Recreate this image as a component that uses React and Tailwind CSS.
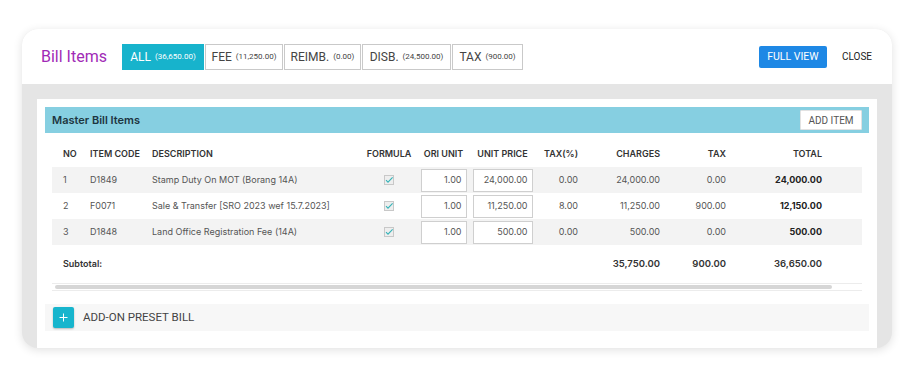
import React from "react";

const tabs = [
  { label: "ALL", amount: "36,650.00", active: true, w: "w-[82px]" },
  { label: "FEE", amount: "11,250.00", w: "w-[78px]" },
  { label: "REIMB.", amount: "0.00", w: "w-[77px]" },
  { label: "DISB.", amount: "24,500.00", w: "w-[89px]" },
  { label: "TAX", amount: "900.00", w: "w-[71px]" },
];

const items = [
  { no: 1, code: "D1849", desc: "Stamp Duty On MOT (Borang 14A)", unit: "1.00", price: "24,000.00", taxPct: "0.00", charges: "24,000.00", tax: "0.00", total: "24,000.00" },
  { no: 2, code: "F0071", desc: "Sale & Transfer [SRO 2023 wef 15.7.2023]", unit: "1.00", price: "11,250.00", taxPct: "8.00", charges: "11,250.00", tax: "900.00", total: "12,150.00" },
  { no: 3, code: "D1848", desc: "Land Office Registration Fee (14A)", unit: "1.00", price: "500.00", taxPct: "0.00", charges: "500.00", tax: "0.00", total: "500.00" },
];

function Check() {
  return (
    <svg width="10" height="10" viewBox="0 0 10 10" className="inline-block">
      <rect x="0.5" y="0.5" width="9" height="9" fill="#eeeeee" stroke="#c8c8c8" />
      <path d="M2 5.2 L4 7.2 L8.6 2.4" fill="none" stroke="#35b3b8" strokeWidth="1.1" />
    </svg>
  );
}

function Field({ value, width }) {
  return (
    <div className={`${width} mx-auto h-[23px] bg-white border border-[#cfcfcf] flex items-center justify-end pr-[4px] text-[9px] text-[#555]`}>
      {value}
    </div>
  );
}

const roboto = { fontFamily: "Roboto, 'Liberation Sans', sans-serif" };

export default function App() {
  return (
    <div className="w-[913px] h-[376px] bg-white pt-[29px] pl-[22px]" style={{ fontFamily: "Inter, 'Noto Sans', sans-serif" }}>
      <div className="w-[870px] h-[319px] rounded-[16px] bg-[#e5e5e5] shadow-[0_2px_10px_rgba(0,0,0,0.12)] flex flex-col overflow-hidden">
        {/* header */}
        <div className="h-[55px] bg-white flex items-center pl-[19px] pr-[20px] shrink-0" style={roboto}>
          <div className="text-[16px] text-[#a12ab6] w-[81px]">Bill Items</div>
          <div className="flex gap-[1px]">
            {tabs.map((t) => (
              <div
                key={t.label}
                className={`${t.w} h-[26px] flex items-center justify-center gap-[4px] border ${t.active ? "bg-[#17b3cc] border-[#17b3cc] text-white" : "bg-white border-[#c9c9c9] text-[#444]"}`}
              >
                <span className="text-[12px]">{t.label}</span>
                <span className="text-[8px]">({t.amount})</span>
              </div>
            ))}
          </div>
          <div className="ml-auto flex items-center gap-[15px]">
            <div className="h-[22px] w-[68px] rounded-[2px] bg-[#1e88e5] text-white text-[10.5px] flex items-center justify-center">FULL VIEW</div>
            <div className="text-[10px] text-[#222]">CLOSE</div>
          </div>
        </div>

        {/* body */}
        <div className="flex-1 px-[15px] pt-[15px]">
          <div className="h-full bg-white pt-[8px] px-[8px]">
            <div className="h-[26px] bg-[#86cfe1] flex items-center pl-[7px] pr-[7px]">
              <div className="text-[11px] font-semibold text-[#1d3540]">Master Bill Items</div>
              <div className="ml-auto h-[20px] w-[62px] bg-white border border-[#e2e2e2] rounded-[1px] text-[10px] text-[#555] flex items-center justify-center" style={roboto}>ADD ITEM</div>
            </div>

            <div className="px-[7px] mt-[8px]">
              <table className="w-[810px] border-collapse table-fixed">
                <colgroup>
                  <col className="w-[33px]" />
                  <col className="w-[62px]" />
                  <col className="w-[214px]" />
                  <col className="w-[56px]" />
                  <col className="w-[53px]" />
                  <col className="w-[65px]" />
                  <col className="w-[48px]" />
                  <col className="w-[82px]" />
                  <col className="w-[66px]" />
                  <col className="w-[96px]" />
                  <col className="w-[35px]" />
                </colgroup>
                <thead>
                  <tr className="h-[26px] text-[9px] text-[#333]">
                    <th className="text-left pl-[11px] font-semibold">NO</th>
                    <th className="text-left pl-[5px] font-semibold">ITEM CODE</th>
                    <th className="text-left pl-[5px] font-semibold">DESCRIPTION</th>
                    <th className="text-center font-semibold">FORMULA</th>
                    <th className="text-center font-semibold">ORI UNIT</th>
                    <th className="text-center font-semibold">UNIT PRICE</th>
                    <th className="text-right pr-[5px] font-semibold">TAX(%)</th>
                    <th className="text-right pr-[5px] font-semibold">CHARGES</th>
                    <th className="text-right pr-[5px] font-semibold">TAX</th>
                    <th className="text-right pr-[5px] font-semibold">TOTAL</th>
                    <th></th>
                  </tr>
                </thead>
                <tbody className="text-[9px] text-[#555]">
                  {items.map((r, i) => (
                    <tr key={r.no} className={`h-[26px] ${i % 2 === 0 ? "bg-[#f3f3f3]" : "bg-white"}`}>
                      <td className="pl-[11px]">{r.no}</td>
                      <td className="pl-[5px]">{r.code}</td>
                      <td className="pl-[5px]">{r.desc}</td>
                      <td className="text-center leading-none"><Check /></td>
                      <td><Field value={r.unit} width="w-[46px]" /></td>
                      <td><Field value={r.price} width="w-[60px]" /></td>
                      <td className="text-right pr-[5px]">{r.taxPct}</td>
                      <td className="text-right pr-[5px]">{r.charges}</td>
                      <td className="text-right pr-[5px]">{r.tax}</td>
                      <td className="text-right pr-[5px] font-bold text-[#222]">{r.total}</td>
                      <td></td>
                    </tr>
                  ))}
                  <tr className="h-[38px] font-semibold text-[#333] text-[9.5px]">
                    <td colSpan={7} className="pl-[11px] text-[9px]">Subtotal:</td>
                    <td className="text-right pr-[5px]">35,750.00</td>
                    <td className="text-right pr-[5px]">900.00</td>
                    <td className="text-right pr-[5px]">36,650.00</td>
                    <td></td>
                  </tr>
                </tbody>
              </table>
              {/* horizontal scrollbar */}
              <div className="w-[810px] h-[8px] border-t border-b border-[#ececec] flex items-center pl-[3px]">
                <div className="w-[777px] h-[4px] bg-[#d6d6d6] rounded-full"></div>
              </div>
            </div>

            <div className="mt-[13px] h-[27px] bg-[#f7f7f7] flex items-center pl-[8px]">
              <div className="w-[21px] h-[21px] bg-[#17b5cd] rounded-[2px] shadow-[0_1px_2px_rgba(0,0,0,0.25)] flex items-center justify-center">
                <svg width="9" height="9" viewBox="0 0 9 9">
                  <path d="M4.5 0.5 V8.5 M0.5 4.5 H8.5" stroke="white" strokeWidth="1" />
                </svg>
              </div>
              <div className="ml-[9px] text-[11.5px] text-[#444]" style={roboto}>ADD-ON PRESET BILL</div>
            </div>
          </div>
        </div>
      </div>
    </div>
  );
}
